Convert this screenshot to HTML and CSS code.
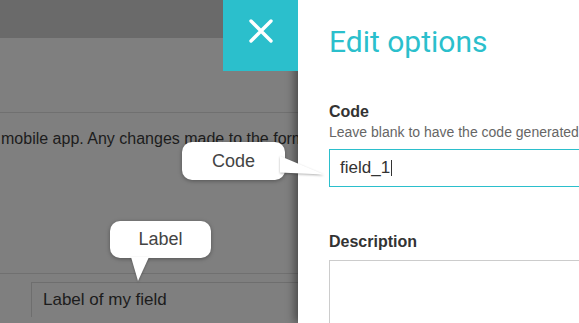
FILE: index.html
```html
<!DOCTYPE html>
<html lang="en">
<head>
    <meta charset="UTF-8">
    <meta name="viewport" content="width=device-width, initial-scale=1.0">
    <title>Edit options</title>
    <link rel="stylesheet" href="styles.css">
</head>
<body>
<div class="app">
    <div class="page">
        <div class="page-top"></div>
        <div class="page-band"></div>
        <p class="page-text">mobile app. Any changes made to the form will be reflected</p>
        <div class="page-field">
            <div class="page-input">Label of my field</div>
        </div>
    </div>

    <aside class="drawer">
        <div class="close">
            <svg width="24" height="24" viewBox="0 0 24 24">
                <path d="M2 2 L22 22 M22 2 L2 22" stroke="#fff" stroke-width="3.4" stroke-linecap="round"/>
            </svg>
        </div>
        <h1 class="title">Edit options</h1>
        <label class="label">Code</label>
        <div class="hint">Leave blank to have the code generated automatically</div>
        <div class="input active">field_1<span class="caret"></span></div>
        <label class="label label-desc">Description</label>
        <div class="textarea"></div>
    </aside>

    <div class="tip tip-code">Code</div>
    <svg class="tail tail-code" width="46" height="30" viewBox="0 0 46 30">
        <polygon points="0,6 0,22.5 44,24.5" fill="#fff"/>
    </svg>

    <div class="tip tip-label">Label</div>
    <svg class="tail tail-label" width="24" height="26" viewBox="0 0 24 26">
        <polygon points="3,0 21,0 10,24" fill="#fff"/>
    </svg>
</div>
</body>
</html>
```

FILE: styles.css
```css
body {
    margin: 0;
    font-family: 'Liberation Sans', Arial, sans-serif;
    background-color: #7f7f7f;
}

.app {
    position: relative;
    display: flex;
    height: 100vh;
    overflow: hidden;
}

.page {
    flex: 1;
    min-width: 0;
    overflow: hidden;
    background-color: #7f7f7f;
}

.page-top {
    height: 38px;
    background-color: #6a6a6a;
}

.page-band {
    height: 74px;
    border-bottom: 1px solid #707070;
}

.page-text {
    margin: 0;
    padding: 16px 0 0 1px;
    font-size: 16px;
    line-height: 20px;
    white-space: nowrap;
    color: #1c1c1c;
}

.page-field {
    margin-top: 124px;
    padding: 8px 0 0 31px;
    border-top: 1px solid #707070;
}

.page-input {
    width: 400px;
    height: 34px;
    padding-left: 11px;
    border: 1px solid #6e6e6e;
    border-bottom: none;
    font-size: 17px;
    line-height: 34px;
    color: #1c1c1c;
    white-space: nowrap;
}

.drawer {
    position: relative;
    width: 281px;
    flex-shrink: 0;
    padding: 22px 0 0 31px;
    box-sizing: border-box;
    background-color: #fff;
    box-shadow: -3px 0 9px rgba(0, 0, 0, 0.45);
}

.close {
    position: absolute;
    top: 0;
    left: -75px;
    width: 75px;
    height: 71px;
    display: flex;
    align-items: center;
    justify-content: center;
    padding-bottom: 10px;
    box-sizing: border-box;
    background-color: #2bbfcc;
}

.title {
    margin: 0;
    font-family: Roboto, 'Liberation Sans', sans-serif;
    font-weight: 400;
    font-size: 30px;
    line-height: 40px;
    color: #2bbfcc;
    white-space: nowrap;
}

.label {
    display: block;
    margin-top: 40px;
    font-weight: 700;
    font-size: 16px;
    line-height: 20px;
    color: #333;
}

.label-desc {
    margin-top: 45px;
}

.hint {
    margin-top: 2px;
    font-size: 14px;
    line-height: 16px;
    color: #666;
    white-space: nowrap;
}

.input {
    margin-top: 9px;
    width: 400px;
    height: 36px;
    padding-left: 10px;
    border: 1px solid #ccc;
    font-size: 17px;
    line-height: 36px;
    color: #333;
    white-space: nowrap;
}

.active {
    border-color: #2bbfcc;
}

.caret {
    display: inline-block;
    width: 1px;
    height: 16px;
    margin-left: 1px;
    vertical-align: -3px;
    background-color: #333;
}

.textarea {
    margin-top: 8px;
    width: 400px;
    height: 100px;
    border: 1px solid #ccc;
}

.tip {
    position: absolute;
    height: 38px;
    border-radius: 10px;
    background-color: #fff;
    box-shadow: 0 1px 4px rgba(0, 0, 0, 0.35);
    font-size: 18px;
    line-height: 38px;
    text-align: center;
    color: #444;
}

.tip-code {
    left: 182px;
    top: 142px;
    width: 103px;
}

.tip-label {
    left: 110px;
    top: 221px;
    width: 101px;
    height: 37px;
    line-height: 37px;
}

.tail {
    position: absolute;
    filter: drop-shadow(0 1px 1px rgba(0, 0, 0, 0.3));
}

.tail-code {
    left: 280px;
    top: 150px;
}

.tail-label {
    left: 128px;
    top: 257px;
}
```
